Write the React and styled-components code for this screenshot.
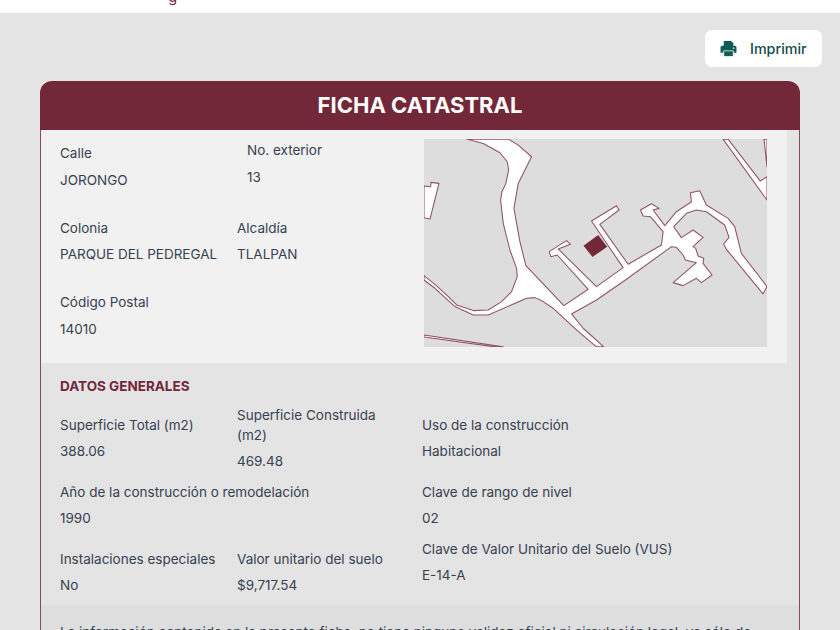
import React from "react";
import styled, { createGlobalStyle } from "styled-components";

const GlobalStyle = createGlobalStyle`
  html, body {
    margin: 0;
    padding: 0;
    background: #e4e4e4;
    font-family: Inter, "Liberation Sans", sans-serif;
    overflow: hidden;
  }
`;

const TopBar = styled.div`
  height: 13px;
  background: #fff;
  overflow: hidden;
  padding-left: 168px;
`;

const Brand = styled.span`
  display: block;
  margin-top: -13px;
  font-size: 15px;
  line-height: 20px;
  color: #722839;
`;

const Page = styled.div`
  padding: 17px 40px 0;
`;

const Actions = styled.div`
  display: flex;
  justify-content: flex-end;
  margin: 0 -22px 14px 0;
`;

const PrintButton = styled.button`
  display: flex;
  align-items: center;
  gap: 13px;
  height: 37px;
  width: 117px;
  padding: 0 0 0 15px;
  border: 0;
  border-radius: 7px;
  background: #fff;
  color: #0f4c4a;
  font: 500 14.3px Inter, sans-serif;
`;

const Card = styled.div`
  width: 760px;
  box-sizing: border-box;
`;

const CardHeader = styled.h1`
  margin: 0;
  height: 49px;
  border-radius: 12px 12px 0 0;
  background: #722839;
  color: #fff;
  font-size: 22px;
  font-weight: 700;
  line-height: 49px;
  text-align: center;
`;

const CardBody = styled.div`
  border: 1px solid #8a4a5a;
  border-top: 0;
  padding-right: 12px;
  color: #374151;
  font-size: 13.5px;
`;

const TopSection = styled.div`
  display: flex;
  height: 233px;
  background: #f1f1f1;
`;

const Label = styled.div`
  line-height: 20px;
`;

const Value = styled.div`
  line-height: 20px;
  margin-top: 6px;
`;

const AddressGrid = styled.div`
  width: 383px;
  box-sizing: border-box;
  padding: 13px 0 0 19px;
  display: grid;
  grid-template-columns: 177px 1fr;
  grid-auto-rows: 74.5px;

  ${Value} {
    margin-top: 6.5px;
  }
`;

const Field = styled.div`
  padding-left: ${(p) => p.$indent || 0}px;
  margin-top: ${(p) => p.$raise || 0}px;
`;

const MapBox = styled.div`
  width: 343px;
  height: 208px;
  margin-top: 9px;
  background: #dddddd;
  flex: none;
`;

const GeneralSection = styled.div`
  padding: 13px 0 0 19px;
`;

const SectionTitle = styled.h2`
  margin: 0 0 8px;
  color: #722839;
  font-size: 13.5px;
  font-weight: 700;
  line-height: 20px;
`;

const GeneralRow = styled.div`
  display: grid;
  grid-template-columns: 177px 185px 1fr;
  align-items: center;
  height: 67px;
`;

const GeneralCell = styled.div`
  grid-column: span ${(p) => p.$span || 1};
  padding-bottom: ${(p) => p.$lift || 0}px;
`;

const Notice = styled.div`
  margin-right: -12px;
  padding: 17px 30px 18px 19px;
  background: #dedede;
  line-height: 21px;
`;

const ROAD = "#8f5365";

const MapDrawing = () => (
  <svg width="343" height="208" viewBox="12 27 1030 624" style={{ display: "block" }}>
    <g fill="#fff" stroke={ROAD} strokeWidth="3.2" strokeLinejoin="round">
      <path d="M140 27 190 40 240 68 262 95 266 120 258 160 246 185 242 210 250 280 270 360 290 415 292 440 275 485 245 515 205 540 160 542 110 525 85 500 50 468 12 437V450L45 475 105 530 160 555 205 555 320 505 345 503 365 512 400 535 470 600 530 651H552L490 595 455 552 530 510 620 448 755 350 770 352 790 375 797 390 830 398 760 458 790 467 830 445 845 458 877 435 850 400 852 385 835 378 828 355 820 350 850 322 820 300 785 323 762 290 800 250 830 240 860 245 915 285 928 322 912 342 920 358 1030 492 1042 470 965 370 945 290 925 265 860 225 840 182 812 188 815 215 770 245 735 287 700 240 718 235 695 221 662 240 670 258 692 260 730 305 725 345 625 403 540 283 598 240 590 227 515 273 610 413 530 470 415 357 452 343 440 332 388 365 393 380 412 375 505 478 432 527 318 407 300 335 282 235 295 160 335 80 295 45 265 27Z" />
      <path d="M12 168 32 170 33 157 57 160 30 267 12 263Z" />
      <path d="M925 27 1022 153 1042 140V210L910 27Z" />
      <path d="M1033 27 1042 110V27Z" />
      <path d="M12 615 250 651H225L12 621Z" />
    </g>
    <path d="M491 347 535 315 562 350 518 381Z" fill="#722839" />
  </svg>
);

const App = () => (
  <>
    <GlobalStyle />
    <TopBar>
      <Brand>g</Brand>
    </TopBar>
    <Page>
      <Actions>
        <PrintButton>
          <svg width="17" height="17" viewBox="0 0 16 16" fill="#0f5c55">
            <path d="M3.5 1h7L12.5 3v3h-9z" />
            <path d="M2 5.5h12A1.5 1.5 0 0 1 15.5 7v5h-3v-1.5h-9V12h-3V7A1.5 1.5 0 0 1 2 5.5z" />
            <path d="M3.5 10.2h9V15.5h-9z" stroke="#fff" strokeWidth="0.7" />
            <path d="M12 7.2h1.6v1H12z" fill="#fff" />
          </svg>
          Imprimir
        </PrintButton>
      </Actions>
      <Card>
        <CardHeader>FICHA CATASTRAL</CardHeader>
        <CardBody>
          <TopSection>
            <AddressGrid>
              <Field>
                <Label>Calle</Label>
                <Value>JORONGO</Value>
              </Field>
              <Field $indent={10} $raise={-3}>
                <Label>No. exterior</Label>
                <Value>13</Value>
              </Field>
              <Field>
                <Label>Colonia</Label>
                <Value>PARQUE DEL PEDREGAL</Value>
              </Field>
              <Field>
                <Label>Alcaldía</Label>
                <Value>TLALPAN</Value>
              </Field>
              <Field>
                <Label>Código Postal</Label>
                <Value>14010</Value>
              </Field>
            </AddressGrid>
            <MapBox>
              <MapDrawing />
            </MapBox>
          </TopSection>
          <GeneralSection>
            <SectionTitle>DATOS GENERALES</SectionTitle>
            <GeneralRow>
              <GeneralCell>
                <Label>Superficie Total (m2)</Label>
                <Value>388.06</Value>
              </GeneralCell>
              <GeneralCell>
                <Label>
                  Superficie Construida
                  <br />
                  (m2)
                </Label>
                <Value>469.48</Value>
              </GeneralCell>
              <GeneralCell>
                <Label>Uso de la construcción</Label>
                <Value>Habitacional</Value>
              </GeneralCell>
            </GeneralRow>
            <GeneralRow>
              <GeneralCell $span={2}>
                <Label>Año de la construcción o remodelación</Label>
                <Value>1990</Value>
              </GeneralCell>
              <GeneralCell>
                <Label>Clave de rango de nivel</Label>
                <Value>02</Value>
              </GeneralCell>
            </GeneralRow>
            <GeneralRow>
              <GeneralCell>
                <Label>Instalaciones especiales</Label>
                <Value>No</Value>
              </GeneralCell>
              <GeneralCell>
                <Label>Valor unitario del suelo</Label>
                <Value>$9,717.54</Value>
              </GeneralCell>
              <GeneralCell $lift={20}>
                <Label>Clave de Valor Unitario del Suelo (VUS)</Label>
                <Value>E-14-A</Value>
              </GeneralCell>
            </GeneralRow>
          </GeneralSection>
          <Notice>
            La información contenida en la presente ficha, no tiene ninguna validez oficial ni circulación legal, ya
            sólo de carácter informativo.
          </Notice>
        </CardBody>
      </Card>
    </Page>
  </>
);

export default App;
